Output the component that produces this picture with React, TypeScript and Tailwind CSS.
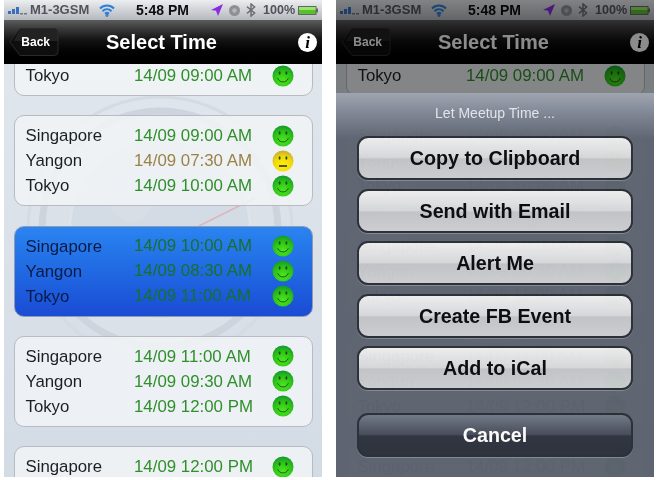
import React from "react";

const FONT = { fontFamily: '"Liberation Sans", Arial, sans-serif' };

type Mood = "happy" | "meh";

function Smiley({ mood = "happy" }: { mood?: Mood }) {
  const id = mood === "happy" ? "smileGreen" : "smileYellow";
  return (
    <svg width="22" height="22" viewBox="0 0 22 22" className="shrink-0">
      <defs>
        <radialGradient id={id} cx="50%" cy="72%" r="70%">
          {mood === "happy" ? (
            <>
              <stop offset="0%" stopColor="#4ce81e" />
              <stop offset="65%" stopColor="#2cc018" />
              <stop offset="100%" stopColor="#159a2e" />
            </>
          ) : (
            <>
              <stop offset="0%" stopColor="#fff000" />
              <stop offset="60%" stopColor="#f0d810" />
              <stop offset="100%" stopColor="#c8b030" />
            </>
          )}
        </radialGradient>
      </defs>
      <circle cx="11" cy="11" r="10.5" fill={`url(#${id})`} />
      <ellipse cx="7.6" cy="8" rx="1" ry="1.8" fill="#1c4a14" />
      <ellipse cx="14.4" cy="8" rx="1" ry="1.8" fill="#1c4a14" />
      {mood === "happy" ? (
        <path d="M5.6 13.2c1.4 3 3.4 3.7 5.4 3.7s4-.7 5.4-3.7" fill="none" stroke="#1c4a14" strokeWidth=".9" />
      ) : (
        <path d="M7 16h8" fill="none" stroke="#222" strokeWidth="1.5" />
      )}
    </svg>
  );
}

type Row = { city: string; time: string; mood?: Mood };

function Card({ rows, selected, endAligned }: { rows: Row[]; selected?: boolean; endAligned?: boolean }) {
  return (
    <div
      className={
        "flex h-[91px] flex-col rounded-[10px] border-[1.5px] pl-[11px] " +
        (endAligned ? "justify-end pb-[7px] " : "pt-[7px] ") +
        (selected
          ? "border-[#8e9bb2] bg-gradient-to-b from-[#2b84f0] to-[#1b4bd4]"
          : "border-[#b8bbc2] bg-[#f1f4f7]/85")
      }
    >
      {rows.map((r) => (
        <div key={r.city} className="flex h-[25px] items-center">
          <span className={"w-[108.5px] text-[16.8px] " + (selected ? "text-[#0b1b46]" : "text-[#1c1f24]")}>{r.city}</span>
          <span
            className={
              "w-[137.5px] text-[16.85px] " +
              (selected ? "text-[#17702c]" : r.mood === "meh" ? "text-[#9a8248]" : "text-[#2f8f2a]")
            }
          >
            {r.time}
          </span>
          <Smiley mood={r.mood} />
        </div>
      ))}
    </div>
  );
}

function Compass() {
  return (
    <svg className="absolute left-[20px] top-[30px]" width="280" height="270" viewBox="0 0 280 270">
      <circle cx="136" cy="135" r="132" fill="none" stroke="#d4dbe3" strokeWidth="3" />
      <circle cx="136" cy="135" r="118" fill="#dbe1e8" stroke="#cdd4dd" strokeWidth="7" />
      <circle cx="136" cy="135" r="90" fill="#d3dbe5" stroke="#dfe4ea" strokeWidth="2" />
      <path d="M80 90c20-20 50-25 70-15 10 20-20 30-30 50-20 10-40-10-40-35z" fill="#d8dee6" />
      <path d="M175 132l56-28" stroke="#dcb4ba" strokeWidth="1.5" />
    </svg>
  );
}

function BackButton() {
  return (
    <div className="relative ml-[5px] flex h-[30px] w-[50px] items-center justify-end pr-[9px] text-[12px] font-bold text-white">
      <svg className="absolute inset-0" width="50" height="30" viewBox="0 0 50 30">
        <path d="M1 15 11 1.5h34a4 4 0 0 1 4 4v19a4 4 0 0 1-4 4H11z" fill="#0e0e0e" stroke="#2a2a2a" strokeWidth="1" />
        <path d="M11 2h34a4 4 0 0 1 4 4v8H5z" fill="#333" opacity=".55" />
      </svg>
      <span className="relative">Back</span>
    </div>
  );
}

function StatusBar() {
  return (
    <div className="flex h-[20px] items-center bg-gradient-to-b from-[#eceef0] to-[#b5b9be] text-[#50545a]">
      <svg className="ml-[4px]" width="19" height="10" viewBox="0 0 19 10">
        <rect x="0" y="6" width="3" height="3" fill="#3a6fc0" />
        <rect x="4" y="4" width="3" height="5" fill="#3a6fc0" />
        <rect x="8" y="2" width="3" height="7" fill="#3a6fc0" />
        <rect x="12" y="8" width="3" height="1.5" fill="#777" />
        <rect x="16" y="8" width="3" height="1.5" fill="#777" />
      </svg>
      <span className="ml-[3px] w-[69px] text-[13px] font-bold">M1-3GSM</span>
      <svg width="16" height="13" viewBox="0 0 16 13" fill="none" stroke="#2f7fd8" strokeWidth="2">
        <path d="M1 4.5C5 .5 11 .5 15 4.5" />
        <path d="M3.5 7.2c2.6-2.6 6.4-2.6 9 0" />
        <path d="M6 9.8c1.2-1.1 2.8-1.1 4 0" />
        <circle cx="8" cy="11.3" r=".6" fill="#2f7fd8" />
      </svg>
      <span className="ml-[21px] w-[75px] text-[14px] font-bold text-[#0c0c0c]">5:48 PM</span>
      <svg width="12" height="12" viewBox="0 0 12 12">
        <path d="M12 0 0 6l5 .8L7 12z" fill="#8a2be2" />
      </svg>
      <svg className="ml-[6px]" width="11" height="11" viewBox="0 0 11 11">
        <circle cx="5.5" cy="5.5" r="5.5" fill="#8d9196" />
        <circle cx="5.5" cy="5.5" r="2.2" fill="#b4b7bb" />
      </svg>
      <svg className="ml-[6px]" width="10" height="14" viewBox="0 0 10 14" fill="none" stroke="#6c7075" strokeWidth="1.5">
        <path d="M1 3.6 8.6 10 5 13V1l3.6 3L1 10.4" />
      </svg>
      <span className="ml-[7px] w-[35px] text-[12.6px] font-bold">100%</span>
      <svg width="20" height="9" viewBox="0 0 20 9">
        <rect x=".5" y=".5" width="17.5" height="8" fill="#55c22a" stroke="#666" />
        <rect x="1" y="1" width="16.5" height="3" fill="#9be36e" />
        <rect x="18" y="2.5" width="2" height="4" fill="#666" />
      </svg>
    </div>
  );
}

function NavBar() {
  return (
    <div className="flex h-[44px] items-center bg-gradient-to-b from-[#5c5c5c] via-[#141414] via-45% to-black">
      <div className="w-[102px]">
        <BackButton />
      </div>
      <div className="w-[192px] text-[20px] font-bold text-white">Select Time</div>
      <div className="flex h-[19px] w-[19px] items-center justify-center rounded-full bg-white">
        <span className="text-[17px] font-bold italic leading-none text-black" style={{ fontFamily: '"Liberation Serif", serif' }}>
          i
        </span>
      </div>
    </div>
  );
}

const cards: Row[][] = [
  [{ city: "Tokyo", time: "14/09 09:00 AM" }],
  [
    { city: "Singapore", time: "14/09 09:00 AM" },
    { city: "Yangon", time: "14/09 07:30 AM", mood: "meh" },
    { city: "Tokyo", time: "14/09 10:00 AM" },
  ],
  [
    { city: "Singapore", time: "14/09 10:00 AM" },
    { city: "Yangon", time: "14/09 08:30 AM" },
    { city: "Tokyo", time: "14/09 11:00 AM" },
  ],
  [
    { city: "Singapore", time: "14/09 11:00 AM" },
    { city: "Yangon", time: "14/09 09:30 AM" },
    { city: "Tokyo", time: "14/09 12:00 PM" },
  ],
  [{ city: "Singapore", time: "14/09 12:00 PM" }],
];

function SheetButton({ label, dark }: { label: string; dark?: boolean }) {
  return (
    <div
      className={
        "relative flex h-[44px] items-center justify-center rounded-[11px] border-[2.5px] border-[#2b2f37] pt-[2px] text-[19.7px] font-bold shadow-[0_1px_0_#858a94] " +
        (dark
          ? "bg-[linear-gradient(#737a88,#454b58_50%,#2f3440_52%,#2c313c)] text-white"
          : "bg-[linear-gradient(#f1f1f2,#d8d9db_50%,#c4c6ca_52%,#ced0d3)] text-[#0b0b0d]")
      }
    >
      {label}
    </div>
  );
}

function ActionSheet() {
  return (
    <div className="absolute inset-x-0 bottom-0 top-[93px] bg-[linear-gradient(#a0a6b2,#7d8492_6%,#5f6572_12%,#5e6471)] opacity-[.97]">
      <div className="pt-[12px] text-center text-[14px] leading-[16px] text-[#e6e8ec]">Let Meetup Time ...</div>
      <div className="mx-[21px] mt-[15px] flex flex-col gap-[8.5px]">
        <SheetButton label="Copy to Clipboard" />
        <SheetButton label="Send with Email" />
        <SheetButton label="Alert Me" />
        <SheetButton label="Create FB Event" />
        <SheetButton label="Add to iCal" />
        <div className="mt-[14px]">
          <SheetButton label="Cancel" dark />
        </div>
      </div>
    </div>
  );
}

function Phone({ dimmed }: { dimmed?: boolean }) {
  return (
    <div className="relative flex h-[477px] w-[318px] flex-col overflow-hidden">
      <StatusBar />
      <NavBar />
      <div className="relative flex-1 overflow-hidden bg-gradient-to-b from-[#e0e6ec] to-[#d3dbe5]">
        <Compass />
        <div className="relative -mt-[59px] flex flex-col gap-[19.3px] px-[9.5px]">
          {cards.map((rows, i) => (
            <Card key={i} rows={rows} selected={!dimmed && i === 2} endAligned={i === 0} />
          ))}
        </div>
      </div>
      {dimmed && (
        <>
          <div className="absolute inset-0 bg-black/45" />
          <ActionSheet />
        </>
      )}
    </div>
  );
}

export default function App() {
  return (
    <div className="flex h-[480px] w-[656px] gap-[14px] overflow-hidden bg-white pl-[4px] blur-[0.3px]" style={FONT}>
      <Phone />
      <Phone dimmed />
    </div>
  );
}
